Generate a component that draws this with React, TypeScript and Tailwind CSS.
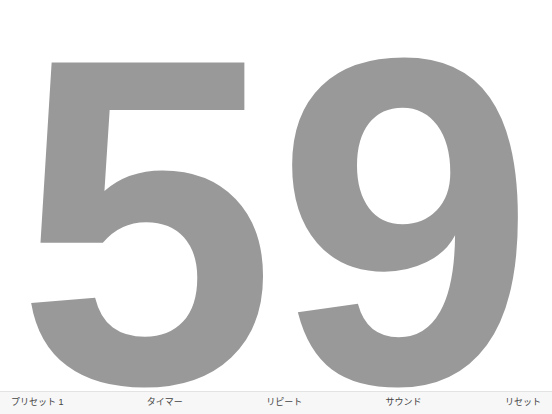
export default function App() {
  const tabs = ['プリセット 1', 'タイマー', 'リピート', 'サウンド', 'リセット'];

  return (
    <div className="h-[414px] w-[552px] flex flex-col bg-white overflow-hidden font-['Liberation_Sans','Noto_Sans_CJK_JP',sans-serif]">
      {/* Countdown */}
      <div className="flex-1 overflow-hidden flex justify-center">
        <div className="mt-[-11px] text-[466px] leading-none font-bold text-[#999999] select-none">
          59
        </div>
      </div>

      {/* Bottom bar */}
      <div className="h-[23px] shrink-0 border-t border-[#e3e3e3] bg-[#f7f7f7] px-[11px] flex items-center justify-between text-[9px] text-[#444444]">
        {tabs.map((t) => (
          <span key={t}>{t}</span>
        ))}
      </div>
    </div>
  );
}
